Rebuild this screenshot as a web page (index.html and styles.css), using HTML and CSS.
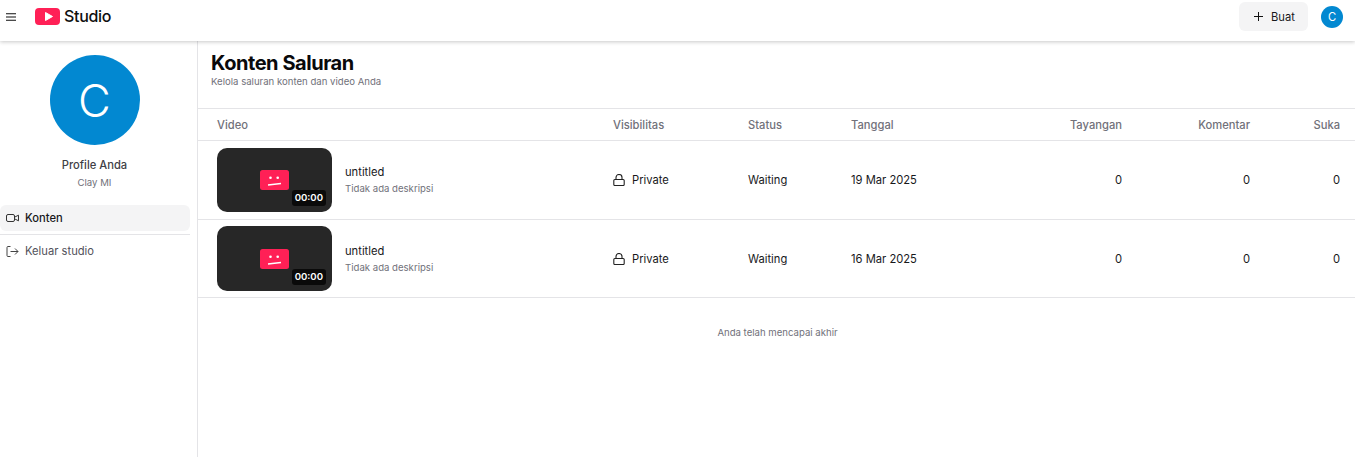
FILE: index.html
```html
<!DOCTYPE html>
<html lang="id">
<head>
<meta charset="utf-8">
<title>Studio</title>
<link rel="stylesheet" href="styles.css">
</head>
<body>
<header class="topbar">
  <div class="topbar-left">
    <svg class="menu-icon" viewBox="0 0 10 8" width="10" height="8"><path d="M0 .75h10M0 4h10M0 7.25h10" stroke="#0f0f0f" stroke-width="1.1" fill="none"/></svg>
    <svg class="logo" viewBox="0 0 25 17" width="25" height="17"><rect width="25" height="17" rx="4" fill="#ff2056"/><path d="M10.5 4.5v8l7-4z" fill="#fff" stroke="#fff" stroke-width="1" stroke-linejoin="round"/></svg>
    <span class="brand">Studio</span>
  </div>
  <div class="topbar-right">
    <button class="create-btn"><svg viewBox="0 0 9 9" width="9" height="9"><path d="M4.5 0v9M0 4.5h9" stroke="#111" stroke-width="1" fill="none"/></svg><span>Buat</span></button>
    <div class="avatar-small">C</div>
  </div>
</header>
<div class="layout">
  <aside class="sidebar">
    <div class="avatar-large">C</div>
    <div class="profile-name">Profile Anda</div>
    <div class="profile-sub">Clay MI</div>
    <nav class="nav">
      <a class="nav-item active">
        <svg viewBox="0 0 13 10" width="13" height="10" fill="none" stroke="#333" stroke-width="1"><rect x=".5" y="1.5" width="8" height="7" rx="1.5"/><path d="M8.5 4.2l4-2v5.6l-4-2"/></svg>
        <span>Konten</span>
      </a>
      <div class="nav-sep"></div>
      <a class="nav-item">
        <svg viewBox="0 0 13 11" width="13" height="11" fill="none" stroke="#444" stroke-width="1"><path d="M4.5.5H2a1 1 0 0 0-1 1v8a1 1 0 0 0 1 1h2.5M4.5 5.5h7.5M9 2.5l3 3-3 3"/></svg>
        <span>Keluar studio</span>
      </a>
    </nav>
  </aside>
  <main class="main">
    <div class="page-head">
      <h1>Konten Saluran</h1>
      <p>Kelola saluran konten dan video Anda</p>
    </div>
    <div class="row head">
      <div>Video</div><div>Visibilitas</div><div>Status</div><div>Tanggal</div>
      <div class="num">Tayangan</div><div class="num">Komentar</div><div class="num">Suka</div>
    </div>
    <div class="row item">
      <div class="video">
        <div class="thumb">
          <svg class="thumb-icon" viewBox="0 0 29 20" width="29" height="20"><rect width="29" height="20" rx="2.5" fill="#ff2056"/><circle cx="10.5" cy="7.7" r="1.3" fill="#fff"/><circle cx="17.7" cy="7.7" r="1.3" fill="#fff"/><path d="M8 15l13-1.5" stroke="#fff" stroke-width="1.5"/></svg>
          <span class="duration">00:00</span>
        </div>
        <div class="meta"><div class="title">untitled</div><div class="desc">Tidak ada deskripsi</div></div>
      </div>
      <div class="vis"><svg viewBox="0 0 12 12" width="12" height="12" fill="none" stroke="#222" stroke-width="1.1"><rect x=".8" y="5.5" width="10.4" height="6" rx="1"/><path d="M3 5.5V3.5a3 3 0 0 1 6 0v2"/></svg><span>Private</span></div>
      <div>Waiting</div><div>19 Mar 2025</div>
      <div class="num">0</div><div class="num">0</div><div class="num">0</div>
    </div>
    <div class="row item">
      <div class="video">
        <div class="thumb">
          <svg class="thumb-icon" viewBox="0 0 29 20" width="29" height="20"><rect width="29" height="20" rx="2.5" fill="#ff2056"/><circle cx="10.5" cy="7.7" r="1.3" fill="#fff"/><circle cx="17.7" cy="7.7" r="1.3" fill="#fff"/><path d="M8 15l13-1.5" stroke="#fff" stroke-width="1.5"/></svg>
          <span class="duration">00:00</span>
        </div>
        <div class="meta"><div class="title">untitled</div><div class="desc">Tidak ada deskripsi</div></div>
      </div>
      <div class="vis"><svg viewBox="0 0 12 12" width="12" height="12" fill="none" stroke="#222" stroke-width="1.1"><rect x=".8" y="5.5" width="10.4" height="6" rx="1"/><path d="M3 5.5V3.5a3 3 0 0 1 6 0v2"/></svg><span>Private</span></div>
      <div>Waiting</div><div>16 Mar 2025</div>
      <div class="num">0</div><div class="num">0</div><div class="num">0</div>
    </div>
    <div class="end">Anda telah mencapai akhir</div>
  </main>
</div>
</body>
</html>
```
FILE: styles.css
```css
* { box-sizing: border-box; }
html, body { margin: 0; height: 100%; overflow: hidden; }
body { font-family: Inter, "Liberation Sans", sans-serif; color: #0a0a0a; background: #fff; font-size: 11.2px; }

.topbar {
  height: 41px; display: flex; align-items: flex-start; justify-content: space-between;
  padding: 2px 12px 0 6px; background: #fff; box-shadow: 0 1px 4px rgba(0,0,0,.22);
  position: relative; z-index: 2;
}
.topbar-left { display: flex; align-items: center; height: 29px; }
.menu-icon { margin-right: 19px; }
.logo { margin-right: 4px; }
.brand { font-size: 16px; font-weight: 500; letter-spacing: -.3px; color: #0f0f0f; position: relative; top: -1px; }
.topbar-right { display: flex; align-items: center; gap: 13px; height: 29px; }
.create-btn {
  width: 69px; height: 29px; border: 0; border-radius: 6px; background: #f4f4f5;
  display: flex; align-items: center; gap: 8px;
  font: 400 11.2px Inter, sans-serif; color: #18181b; padding: 0 0 0 15px;
}
.avatar-small {
  width: 22px; height: 22px; border-radius: 50%; background: #0288d1; color: #fff;
  display: flex; align-items: center; justify-content: center; font-size: 11.2px;
}

.layout { display: flex; height: 416px; }
.sidebar {
  width: 198px; flex: none; border-right: 1px solid #e4e4e7; padding-top: 14px;
  display: flex; flex-direction: column; align-items: center;
}
.avatar-large {
  width: 90px; height: 90px; border-radius: 50%; background: #0288d1; color: #fff;
  display: flex; align-items: center; justify-content: center; font-size: 45px; font-weight: 300;
  margin-left: -8px;
}
.profile-name { margin-top: 13px; font-size: 11.2px; font-weight: 500; color: #3f3f46; line-height: 15px; margin-left: -8px; }
.profile-sub { margin-top: 3px; font-size: 9.6px; color: #71717a; line-height: 13px; margin-left: -8px; }
.nav { width: 100%; margin-top: 16px; padding-right: 7px; }
.nav-item {
  display: flex; align-items: center; gap: 6px; height: 26px; padding-left: 6px;
  font-size: 11.2px; color: #52525b; border-radius: 6px;
}
.nav-item.active { background: #f4f4f5; color: #18181b; font-weight: 500; }
.nav-sep { height: 1px; background: #e4e4e7; margin: 3px 0; }

.main { flex: 1; min-width: 0; }
.page-head { height: 68px; padding: 11px 13px 0; border-bottom: 1px solid #e4e4e7; }
.page-head h1 { margin: 0; font-size: 20px; line-height: 22px; font-weight: 700; color: #09090b; letter-spacing: -.45px; }
.page-head p { margin: 1px 0 0; font-size: 9.6px; line-height: 13px; color: #71717a; }

.row {
  display: grid; grid-template-columns: 396px 135px 103px 1fr 128px 128px 90px;
  padding: 0 15px 0 19px; align-items: center; border-bottom: 1px solid #e4e4e7;
  font-size: 11.2px; color: #18181b;
}
.head { height: 32px; color: #71717a; font-weight: 500; }
.item { padding-top: 6.5px; padding-bottom: 6.5px; }
.num { text-align: right; }

.video { display: flex; align-items: center; gap: 13px; }
.thumb { width: 115px; aspect-ratio: 16 / 9; border-radius: 10px; background: #272727; position: relative; display: flex; align-items: center; justify-content: center; }
.thumb-icon { display: block; }
.duration {
  position: absolute; right: 6px; bottom: 6px; height: 16px; padding: 0 3px; border-radius: 3px;
  background: #0a0a0a; color: #fff; font-size: 9.6px; font-weight: 600; line-height: 16px;
}
.title { font-size: 11.2px; line-height: 15px; color: #18181b; }
.desc { font-size: 9.6px; line-height: 13px; color: #71717a; margin-top: 2px; }
.vis { display: flex; align-items: center; gap: 7px; }

.end { margin-top: 28px; padding-left: 2px; text-align: center; font-size: 9.6px; line-height: 13px; color: #71717a; }
```
